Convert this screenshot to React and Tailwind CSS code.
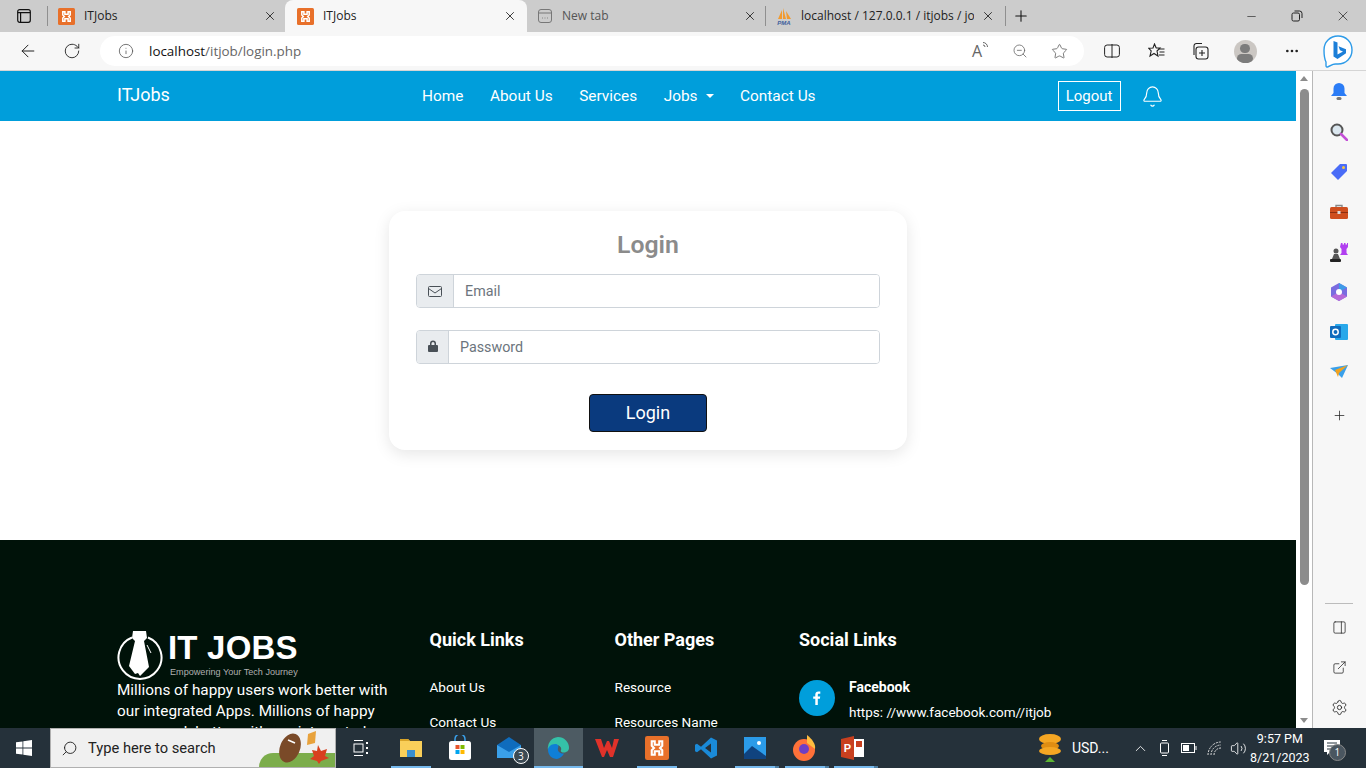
import {
  ArrowLeft, RotateCw, Info, Star, ZoomOut, Plus, X, Minus, MoreHorizontal,
  Bell, Search, ChevronUp, Volume2, Settings, ExternalLink, PanelRight,
} from 'lucide-react';

const roboto = { fontFamily: 'Roboto, sans-serif' };

// favicon of XAMPP, also used in the taskbar
const XamppIcon = ({ size = 17 }) => (
  <svg width={size} height={size} viewBox="0 0 16 16">
    <rect width="16" height="16" rx="1.5" fill="#e8702a" />
    <path d="M4.500 3.500h2v2.300h3V3.500h2v3L10 8l1.500 1.500v3h-2v-2.300h-3v2.300h-2v-3L6 8 4.500 6.500z" fill="none" stroke="#fff" strokeWidth="1.400" />
  </svg>
);

const PmaIcon = () => (
  <svg width="18" height="18" viewBox="0 0 18 18" className="-mr-[1px]">
    <path d="M3 12 7 3v9zM8 12V1l3 11zM12 12l-1-8 5 8z" fill="#f29a2e" />
    <text x="9" y="17.500" textAnchor="middle" fontSize="6" fontWeight="700" fontStyle="italic" fill="#3f5f9c" fontFamily="Liberation Sans, sans-serif">PMA</text>
  </svg>
);

const NewTabIcon = () => (
  <svg width="16" height="16" viewBox="0 0 16 16" fill="none" stroke="#777" strokeWidth="1">
    <rect x="1.500" y="1.500" width="13" height="13" rx="2.500" />
    <path d="M1.500 5h13M5 10h.8M7.600 10h.8M10.200 10h.8" />
  </svg>
);

const Tab = ({ icon, title, active, width, muted }) => (
  <div className={`flex items-center h-8 shrink-0 ${width} ${active ? 'bg-[#f7f7f7] rounded-t-lg' : ''}`}>
    {icon}
    <span className={`ml-[9px] mr-[7px] flex-1 text-[12px] overflow-hidden whitespace-nowrap ${muted ? 'text-[#555]' : 'text-[#222]'}`}>{title}</span>
    <X size={14} strokeWidth={1.5} className="text-[#222] shrink-0" />
  </div>
);

const TabStrip = () => (
  <div className="h-8 bg-[#cccccc] flex items-center shrink-0">
    <div className="w-[47px] flex items-center justify-center pl-[1px]">
      <svg width="14" height="14" viewBox="0 0 14 14" fill="none" stroke="#111" strokeWidth="1.200">
        <rect x="0.700" y="0.700" width="12.600" height="12.600" rx="2" />
        <path d="M0.700 3.600h12.600M3.600 3.600v9.700" />
      </svg>
    </div>
    <div className="w-px h-[20px] bg-[#8f8f8f]" />
    <Tab icon={<XamppIcon />} title="ITJobs" width="w-[237px] pl-[10px] pr-[8px]" />
    <Tab icon={<XamppIcon />} title="ITJobs" active width="w-[242px] pl-[12px] pr-[10px]" />
    <Tab icon={<NewTabIcon />} title="New tab" muted width="w-[238px] pl-[10px] pr-[8px]" />
    <div className="w-px h-[20px] bg-[#8f8f8f]" />
    <Tab icon={<PmaIcon />} title="localhost / 127.0.0.1 / itjobs / job" width="w-[239px] pl-[9px] pr-[10px]" />
    <div className="w-px h-[20px] bg-[#8f8f8f]" />
    <Plus size={18} strokeWidth={1.4} className="ml-[6px] text-[#111]" />
    <div className="ml-auto flex items-center text-[#222]">
      <div className="w-[46px] flex justify-center"><Minus size={13} strokeWidth={1.2} /></div>
      <div className="w-[46px] flex justify-center">
        <svg width="12" height="12" viewBox="0 0 12 12" fill="none" stroke="#222">
          <rect x="1" y="3" width="7.500" height="8" rx="1.500" />
          <path d="M3.500 1h5A2.500 2.500 0 0 1 11 3.500V8" />
        </svg>
      </div>
      <div className="w-[46px] flex justify-center"><X size={16} strokeWidth={1.1} /></div>
    </div>
  </div>
);

const BingIcon = () => (
  <svg width="32" height="34" viewBox="0 0 32 34">
    <path d="M16 2c8 0 14 6 14 14s-6 14-14 14c-2 0-4-.4-5 .5L5.500 33C4 33.500 4 32 4 31v-3C2.500 25 2 20 2 16 2 8 8 2 16 2z" fill="#fff" stroke="#2d9be8" strokeWidth="1.400" />
    <path d="M11.500 7l4 1.500v12l5.500-3-3-1.300-1.500-4 7.500 3v4L15.500 25l-4-2.500z" fill="#1c7fd8" />
  </svg>
);

const Toolbar = () => (
  <div className="h-[39px] bg-[#f7f7f7] flex items-center shrink-0 border-b border-[#d5d5d5]">
    <div className="w-[56px] flex justify-center"><ArrowLeft size={20} strokeWidth={1.2} className="text-[#222]" /></div>
    <div className="w-[32px] flex justify-center"><RotateCw size={18} strokeWidth={1.2} className="text-[#222]" /></div>
    <div className="ml-[12px] w-[984px] h-[30px] bg-white rounded-full flex items-center pl-[18px] pr-[16px]">
      <Info size={16} strokeWidth={1.2} className="text-[#555]" />
      <span className="ml-[15px] text-[13.400px] text-[#111]">localhost<span className="text-[#666]">/itjob/login.php</span></span>
      <div className="ml-auto flex items-center gap-[23px] text-[#666]">
        <span className="w-[17px] text-[16px] leading-none relative">A
          <svg width="7" height="8" viewBox="0 0 7 8" fill="none" stroke="#666" className="absolute -top-[1px] right-0">
            <path d="M1 3a2 2 0 0 1 2 2M1 .5A4.500 4.500 0 0 1 5.500 5" />
          </svg>
        </span>
        <ZoomOut size={16} strokeWidth={1.2} />
        <Star size={17} strokeWidth={1.2} />
      </div>
    </div>
    <div className="flex items-center ml-[6px] text-[#222]">
      <div className="w-[44px] flex justify-center">
        <svg width="16" height="14" viewBox="0 0 16 14" fill="none" stroke="#222" strokeWidth="1">
          <rect x="0.600" y="1" width="14.800" height="12" rx="2.500" />
          <path d="M8 0v14" />
        </svg>
      </div>
      <div className="w-[44px] flex justify-center">
        <svg width="17" height="16" viewBox="0 0 17 16" fill="none" stroke="#222" strokeWidth="1.100">
          <path d="M6.500 1l1.700 4h-.2H12l-3 3 1 5-4-2.500L2 13l1.200-5L.8 5.300 5 5z" />
          <path d="M11 6h5.500M11.500 9h5M11 12h5.500" />
        </svg>
      </div>
      <div className="w-[44px] flex justify-center">
        <svg width="18" height="18" viewBox="0 0 18 18" fill="none" stroke="#222" strokeWidth="1.100">
          <rect x="5" y="5" width="12" height="12" rx="2.500" />
          <path d="M3 13V4a2.500 2.500 0 0 1 2.500-2.500H11M11 8v6M8 11h6" />
        </svg>
      </div>
      <div className="w-[46px] flex justify-center">
        <div className="w-[23px] h-[23px] rounded-full bg-[#cbc7c3] overflow-hidden flex flex-col items-center pt-[4px]">
          <div className="w-[10px] h-[10px] rounded-full bg-[#7c7c7c]" />
          <div className="w-[16px] h-[10px] rounded-full bg-[#7c7c7c] mt-[1px]" />
        </div>
      </div>
      <div className="w-[48px] flex justify-center"><MoreHorizontal size={16} strokeWidth={2} /></div>
    </div>
    <div className="ml-auto mr-[7px] w-[42px] flex justify-center"><BingIcon /></div>
  </div>
);

const Navbar = () => (
  <div className="h-[50px] bg-[#009edb] flex items-center text-white shrink-0 pl-[117px]" style={roboto}>
    <span className="text-[18px] w-[305px] -mt-[3px]">ITJobs</span>
    <nav className="flex items-center gap-[26.500px] text-[15.400px] pt-[1px]">
      <span>Home</span>
      <span>About Us</span>
      <span>Services</span>
      <span className="flex items-center">Jobs<span className="ml-[8px] border-x-[4px] border-x-transparent border-t-[4px] border-t-white" /></span>
      <span>Contact Us</span>
    </nav>
    <div className="ml-[242px] h-[30px] w-[63px] border border-white flex items-center justify-center text-[15px] pt-[1px]">Logout</div>
    <Bell size={23} strokeWidth={1.2} className="ml-[20px]" />
  </div>
);

const InputRow = ({ icon, addonWidth, placeholder }) => (
  <div className="flex h-[34px] border border-[#ced4da] rounded-[4px] overflow-hidden">
    <div className={`${addonWidth} bg-[#e9ecef] border-r border-[#ced4da] flex items-center justify-center`}>{icon}</div>
    <div className="flex-1 bg-white flex items-center pl-[11px] pt-[2px] text-[14.300px] text-[#6c757d]">{placeholder}</div>
  </div>
);

const LoginCard = () => (
  <div className="flex-1 flex flex-col items-center pt-[90px]" style={roboto}>
    <div className="w-[518px] h-[239px] bg-white rounded-[16px] shadow-[0_4px_16px_rgba(0,0,0,0.10)] px-[27px] pt-[18px]">
      <h1 className="text-[24.800px] leading-[32px] font-semibold text-[#8b8b8b] text-center">Login</h1>
      <div className="mt-[13px]">
        <InputRow
          addonWidth="w-[37px]"
          placeholder="Email"
          icon={
            <svg width="14" height="11" viewBox="0 0 14 11" fill="none" stroke="#495057" strokeWidth="1">
              <rect x="0.500" y="0.500" width="13" height="10" rx="1" />
              <path d="M.5 2.500 7 7l6.500-4.500" />
            </svg>
          }
        />
      </div>
      <div className="mt-[22px]">
        <InputRow
          addonWidth="w-[32px]"
          placeholder="Password"
          icon={
            <svg width="10" height="12" viewBox="0 0 10 12" className="-mt-[3px]">
              <path d="M2 5V3.500a3 3 0 0 1 6 0V5h1a1 1 0 0 1 1 1v5a1 1 0 0 1-1 1H1a1 1 0 0 1-1-1V6a1 1 0 0 1 1-1zm1.500 0h3V3.500a1.500 1.500 0 0 0-3 0z" fill="#495057" />
            </svg>
          }
        />
      </div>
      <div className="flex justify-center mt-[30px]">
        <button className="w-[118px] h-[38px] bg-[#0a3a7e] border border-[#111] rounded-[4px] text-white text-[18px] pb-[2px]">Login</button>
      </div>
    </div>
  </div>
);

const FooterLogo = () => (
  <div className="flex items-start h-[50px]">
    <svg width="46" height="50" viewBox="0 0 46 50" className="shrink-0">
      <path d="M15 7.500A21.500 21.500 0 1 0 31 7.500" fill="none" stroke="#fff" strokeWidth="2" />
      <path d="M16 1h13l1 7-3 3 5 26-9 9-2-3-3 1-6-8 6-25-3-3z" fill="#fff" />
      <path d="M30 15l4 8" stroke="#fff" strokeWidth="1" />
    </svg>
    <div className="ml-[5px] flex flex-col" style={{ fontFamily: '"Liberation Sans", sans-serif' }}>
      <span className="text-[33px] leading-[33px] font-bold text-white tracking-[0.2px] mt-[1px]">IT JOBS</span>
      <span className="text-[9.100px] leading-[12px] text-[#b0b0b0] mt-[2px] ml-[2px]">Empowering Your Tech Journey</span>
    </div>
  </div>
);

const Footer = () => (
  <div className="h-[188px] shrink-0 bg-[#001209] text-white pl-[117px] pt-[90px] overflow-hidden flex" style={roboto}>
    <div className="w-[312.500px] shrink-0">
      <FooterLogo />
      <p className="w-[280px] text-[15.300px] leading-[21px]">
        Millions of happy users work better with our integrated Apps. Millions of happy users work better with our integrated Apps.
      </p>
    </div>
    <div className="w-[185px] shrink-0">
      <h4 className="text-[18px] font-bold leading-[20px]">Quick Links</h4>
      <ul className="mt-[27px] text-[13.600px] leading-[20px] space-y-[15px]">
        <li>About Us</li>
        <li>Contact Us</li>
      </ul>
    </div>
    <div className="w-[185px] shrink-0">
      <h4 className="text-[18px] font-bold leading-[20px]">Other Pages</h4>
      <ul className="mt-[27px] text-[13.600px] leading-[20px] space-y-[15px]">
        <li>Resource</li>
        <li>Resources Name</li>
      </ul>
    </div>
    <div className="-ml-[0.500px]">
      <h4 className="text-[18px] font-bold leading-[20px]">Social Links</h4>
      <div className="mt-[29px] flex items-start">
        <div className="w-[36px] h-[36px] rounded-full bg-[#009edb] flex items-center justify-center mt-[1px]">
          <svg width="8" height="14" viewBox="0 0 8 14"><path d="M2.300 14V7.800H.2V5.400h2.100V3.600C2.300 1.500 3.600.4 5.400.4c.9 0 1.600.1 1.900.1v2.200H6c-1 0-1.200.5-1.200 1.200v1.500h2.400l-.3 2.400H4.800V14z" fill="#fff" /></svg>
        </div>
        <div className="ml-[14px] -mt-[2px]">
          <div className="text-[14px] font-bold leading-[20px]">Facebook</div>
          <div className="text-[13.500px] leading-[20px] mt-[5px]">https: //www.facebook.com//itjob</div>
        </div>
      </div>
    </div>
  </div>
);

const Scrollbar = () => (
  <div className="w-[16px] bg-white shrink-0 flex flex-col items-center pt-[5px] pb-[5px] border-r border-[#b8b8b8] box-content">
    <div className="border-x-[4px] border-x-transparent border-b-[5px] border-b-[#8c8c8c]" />
    <div className="w-[9px] h-[496px] bg-[#8c8c8c] rounded-full mt-[8px]" />
    <div className="mt-auto border-x-[4px] border-x-transparent border-t-[5px] border-t-[#8c8c8c]" />
  </div>
);

const SideIcon = ({ children }) => <div className="h-[40px] flex items-center justify-center">{children}</div>;

const SidePanel = () => (
  <div className="flex-1 bg-[#f7f7f7] flex flex-col items-center pt-[1px] pb-[1px] pr-[1px]">
    <SideIcon>
      <svg width="16" height="18" viewBox="0 0 16 18"><path d="M8 0a5.500 5.500 0 0 1 5.500 5.500V10l2.500 3H0l2.500-3V5.500A5.500 5.500 0 0 1 8 0z" fill="#2b7cf6" /><rect x="5.500" y="14" width="5" height="3" rx="1.500" fill="#777" /></svg>
    </SideIcon>
    <SideIcon>
      <svg width="18" height="18" viewBox="0 0 18 18" fill="none"><circle cx="7" cy="7" r="5.500" fill="#dbe7ef" stroke="#555" strokeWidth="2" /><path d="m11 11 6 6" stroke="#c34fd6" strokeWidth="2.500" strokeLinecap="round" /></svg>
    </SideIcon>
    <SideIcon>
      <svg width="18" height="18" viewBox="0 0 18 18"><path d="M10 1h6a1 1 0 0 1 1 1v6L8 17 1 10z" fill="#4a6cf7" /><circle cx="13.500" cy="4.500" r="1.500" fill="#f4c542" /></svg>
    </SideIcon>
    <SideIcon>
      <svg width="18" height="16" viewBox="0 0 18 16"><path d="M6 3V1.500h6V3" fill="none" stroke="#888" strokeWidth="1.400" /><rect y="3" width="18" height="12" rx="1.500" fill="#cf4f1f" /><rect y="8" width="18" height="1" fill="#8e2f10" /><rect x="7.500" y="7" width="3" height="3" fill="#ddd" /></svg>
    </SideIcon>
    <SideIcon>
      <svg width="18" height="20" viewBox="0 0 18 20"><path d="M11 1h1.500v1.500H14V1h1.500v1.500H17V1h1v4l-1.500 2v4l1.500 2H10l1.500-2V7L10 5z" fill="#b13ff0" /><circle cx="6" cy="9" r="2.500" fill="#555" /><path d="M4 12h4l2 5H2z" fill="#555" /><rect y="17" width="11" height="3" rx="1" fill="#222" /></svg>
    </SideIcon>
    <SideIcon>
      <svg width="18" height="18" viewBox="0 0 18 18"><path d="M9 0l8 4.500v9L9 18l-8-4.500v-9z" fill="#7a6ce0" /><path d="M9 0l8 4.500L9 9z" fill="#3f9be8" /><path d="M1 13.500 9 9l8 4.500L9 18z" fill="#b76ad8" /><circle cx="9" cy="9" r="3" fill="#fff" /></svg>
    </SideIcon>
    <SideIcon>
      <svg width="18" height="18" viewBox="0 0 18 18"><rect x="5" y="1" width="13" height="16" rx="1" fill="#28a8ea" /><rect y="3" width="11" height="12" rx="1" fill="#0f6cbd" /><circle cx="5.500" cy="9" r="2.700" fill="none" stroke="#fff" strokeWidth="1.500" /></svg>
    </SideIcon>
    <SideIcon>
      <svg width="18" height="14" viewBox="0 0 18 14"><path d="M0 3l18-3-6 13-4-4z" fill="#3aa0ea" /><path d="M5 5l13-5-9 8-1 4z" fill="#f2a21f" /></svg>
    </SideIcon>
    <div className="mt-[3px]"><SideIcon><Plus size={15} strokeWidth={1.2} className="text-[#222]" /></SideIcon></div>
    <div className="mt-auto w-[28px] h-px bg-[#bcbcbc] mb-[3px]" />
    <SideIcon><PanelRight size={15} strokeWidth={1.2} className="text-[#222]" /></SideIcon>
    <SideIcon><ExternalLink size={15} strokeWidth={1.2} className="text-[#222]" /></SideIcon>
    <SideIcon><Settings size={17} strokeWidth={1.2} className="text-[#222]" /></SideIcon>
  </div>
);

const Running = ({ active, on, stacked, children }) => (
  <div className={`w-[49.200px] h-full flex items-center justify-center relative shrink-0 ${active ? 'bg-[#4d5b63]' : ''}`}>
    {children}
    {on && <span className={`absolute bottom-0 h-[2px] bg-[#76b9ed] ${active ? 'inset-x-0' : 'left-[5px] w-[40px]'}`} />}
    {stacked && <span className="absolute bottom-0 left-[45px] w-[4px] h-[2px] bg-[#4f7fa3]" />}
  </div>
);

const Taskbar = () => (
  <div className="h-[40px] bg-[#25313a] flex items-center shrink-0 text-white" style={{ fontFamily: '"Open Sans", sans-serif' }}>
    <div className="w-[50px] flex justify-center pr-[2px]">
      <svg width="16" height="16" viewBox="0 0 16 16" fill="#fff"><path d="M0 2.300 6.500 1.400v6.200H0zM7.300 1.300 16 0v7.600H7.300zM0 8.400h6.500v6.200L0 13.700zM7.300 8.400H16V16l-8.700-1.200z" /></svg>
    </div>
    <div className="w-[286px] h-full bg-[#f0f0f0] border border-[#b0b0b0] flex items-center pl-[10px] relative overflow-hidden">
      <Search size={17} strokeWidth={1.3} className="text-[#222] -scale-x-100" />
      <span className="ml-[10px] text-[14.700px] text-[#222]" style={roboto}>Type here to search</span>
      <span className="absolute right-0 bottom-0 w-[76px] h-[14px] bg-[#7cad4b] rounded-tl-[24px]" />
      <svg width="60" height="34" viewBox="0 0 60 34" className="absolute right-[3px] top-[2px]">
        <ellipse cx="18" cy="17" rx="10" ry="15" fill="#7a4a28" transform="rotate(22 18 17)" />
        <path d="M16 9l7 3" stroke="#fff" strokeWidth="1.500" />
        <path d="M36 3l8-3-1 12-8 2z" fill="#e8a23c" />
        <path d="M46 14l3 6 6-2-2 7 4 2-8 3-2 3-2-3-7-2 4-3-2-6 5 1z" fill="#d8401f" />
      </svg>
    </div>
    <div className="w-[50px] flex justify-center pr-[1px]">
      <svg width="16" height="18" viewBox="0 0 16 18" fill="none" stroke="#fff"><path d="M1 1.500h9M1 16.500h9" /><rect x="1" y="5" width="9" height="8" /><path d="M14 3v2M14 8v2M14 13v2" strokeWidth="2" /></svg>
    </div>
    <div className="h-full flex items-center">
      <Running on>
        <svg width="24" height="22" viewBox="0 0 24 22"><path d="M1 2h8l2 2h12v16H1z" fill="#f9cf5a" /><path d="M1 2h8l2 2H1z" fill="#d9a428" /><rect x="8" y="13" width="8" height="7" fill="#3a8fd0" /></svg>
      </Running>
      <Running>
        <svg width="24" height="26" viewBox="0 0 24 26"><path d="M7 7V4a5 5 0 0 1 10 0v3" fill="none" stroke="#3aa0ea" strokeWidth="1.500" /><rect x="1" y="6" width="22" height="19" rx="2.500" fill="#fff" /><rect x="7.500" y="10" width="4" height="4" fill="#e8542a" /><rect x="12.500" y="10" width="4" height="4" fill="#7fba00" /><rect x="7.500" y="15" width="4" height="4" fill="#00a4ef" /><rect x="12.500" y="15" width="4" height="4" fill="#ffb900" /></svg>
      </Running>
      <Running>
        <div className="relative">
          <svg width="26" height="24" viewBox="0 0 26 24"><path d="M13 1l12 8v13H1V9z" fill="#0f6cbd" /><path d="M1 9l12 7 12-7v13H1z" fill="#3aa0ea" /></svg>
          <span className="absolute -right-[7px] -bottom-[4px] w-[16px] h-[16px] rounded-full bg-[#3c4a54] border border-white text-[10px] flex items-center justify-center">3</span>
        </div>
      </Running>
      <Running active on>
        <svg width="24" height="24" viewBox="0 0 24 24"><path d="M12 1a11 11 0 0 1 11 11c0 3-3 4.500-5 4.500-3 0-3.500-1.500-3-2.500 1-2-1-5-5-5-4.500 0-7.500 3-8 5A11 11 0 0 1 12 1z" fill="#35c1a8" /><path d="M2 14c0-3 3-6 7-6 3 0 4 2 3 4-1 3 2 6 6 5.500a11 11 0 0 1-7 5.500C6 23 2 19 2 14z" fill="#0f7fd6" /></svg>
      </Running>
      <Running>
        <svg width="24" height="20" viewBox="0 0 24 20"><path d="M0 1h6l3 9 3-7h2l3 7 2-9h5l-6 18h-3l-3-7-3 7H7z" fill="#e0322a" /></svg>
      </Running>
      <Running on><XamppIcon size={24} /></Running>
      <Running>
        <svg width="24" height="24" viewBox="0 0 24 24"><path fillRule="evenodd" d="M17 1.500 23 4.400V19.600L17 22.500 7 13.200 3 16.300 1 15.200V8.800L3 7.700 7 10.800zM17 7.500 11 12l6 4.500z" fill="#1a8ad8" /></svg>
      </Running>
      <Running on stacked>
        <svg width="22" height="22" viewBox="0 0 22 22"><rect width="22" height="22" fill="#2b9be8" /><circle cx="15" cy="6" r="2" fill="#fff" /><path d="M0 17l8-8 14 10v3H0z" fill="#10437f" /></svg>
      </Running>
      <Running on stacked>
        <svg width="24" height="26" viewBox="0 0 24 26"><circle cx="12" cy="15" r="11" fill="#ff7139" /><path d="M15 0c5 4 9 9 8 14L15 8z" fill="#ffbd3f" /><circle cx="12" cy="14" r="5" fill="#6f3fc4" /></svg>
      </Running>
      <Running on stacked>
        <svg width="24" height="24" viewBox="0 0 24 24">
          <rect x="10" y="3" width="13" height="18" fill="#fff" />
          <rect x="15" y="5" width="6" height="6" fill="#c8401f" />
          <path d="M0 3l13-3v24L0 21z" fill="#c8401f" />
          <text x="6.500" y="16" textAnchor="middle" fontSize="11" fontWeight="700" fill="#fff" fontFamily="Liberation Sans, sans-serif">P</text>
        </svg>
      </Running>
    </div>
    <div className="ml-[160px] flex items-center">
      <svg width="24" height="30" viewBox="0 0 24 30"><ellipse cx="12" cy="6" rx="11" ry="5" fill="#f5a623" /><ellipse cx="12" cy="13" rx="9" ry="4" fill="#e08d12" /><ellipse cx="12" cy="18" rx="11" ry="4" fill="#f5a623" /><path d="M12 24l5 5H7z" fill="#5cb531" /></svg>
      <span className="ml-[10px] text-[14px]" style={roboto}>USD...</span>
    </div>
    <ChevronUp size={17} strokeWidth={1.2} className="ml-[23px]" />
    <svg width="12" height="20" viewBox="0 0 12 20" fill="none" stroke="#fff" className="ml-[10px]"><rect x="1.500" y="5" width="8" height="10" rx="1" /><path d="M3 2.500h5M3 17.500h5" /></svg>
    <svg width="16" height="10" viewBox="0 0 16 10" fill="none" stroke="#fff" className="ml-[10px]"><rect x="0.500" y="0.500" width="13" height="9" /><rect x="2" y="2" width="6" height="6" fill="#fff" stroke="none" /><path d="M15 3v4" /></svg>
    <svg width="15" height="15" viewBox="0 0 15 15" fill="none" stroke="#ddd" className="ml-[10px]"><path d="M1 14A13 13 0 0 1 14 1M4 14A10 10 0 0 1 14 4M7 14a7 7 0 0 1 7-7" strokeDasharray="2 1" /></svg>
    <Volume2 size={17} strokeWidth={1.2} className="ml-[8px]" />
    <div className="w-[64px] ml-[1px] text-center text-[12.500px] leading-[19px]" style={roboto}>
      <div>9:57 PM</div>
      <div>8/21/2023</div>
    </div>
    <div className="ml-[12px] relative">
      <svg width="16" height="16" viewBox="0 0 16 16" fill="#fff"><path d="M0 0h16v12H6l-3 3v-3H0z" /><path d="M3 3h10M3 6h10M3 9h6" stroke="#25333d" /></svg>
      <span className="absolute -right-[6px] -bottom-[5px] w-[17px] h-[17px] rounded-full bg-[#4a5660] border border-[#888] text-[10px] flex items-center justify-center">1</span>
    </div>
  </div>
);

export default function App() {
  return (
    <div className="h-screen w-full flex flex-col overflow-hidden" style={{ fontFamily: '"Open Sans", sans-serif' }}>
      <TabStrip />
      <Toolbar />
      <div className="flex-1 flex min-h-0">
        <div className="w-[1296px] shrink-0 flex flex-col overflow-hidden bg-white">
          <Navbar />
          <LoginCard />
          <Footer />
        </div>
        <Scrollbar />
        <SidePanel />
      </div>
      <Taskbar />
    </div>
  );
}
